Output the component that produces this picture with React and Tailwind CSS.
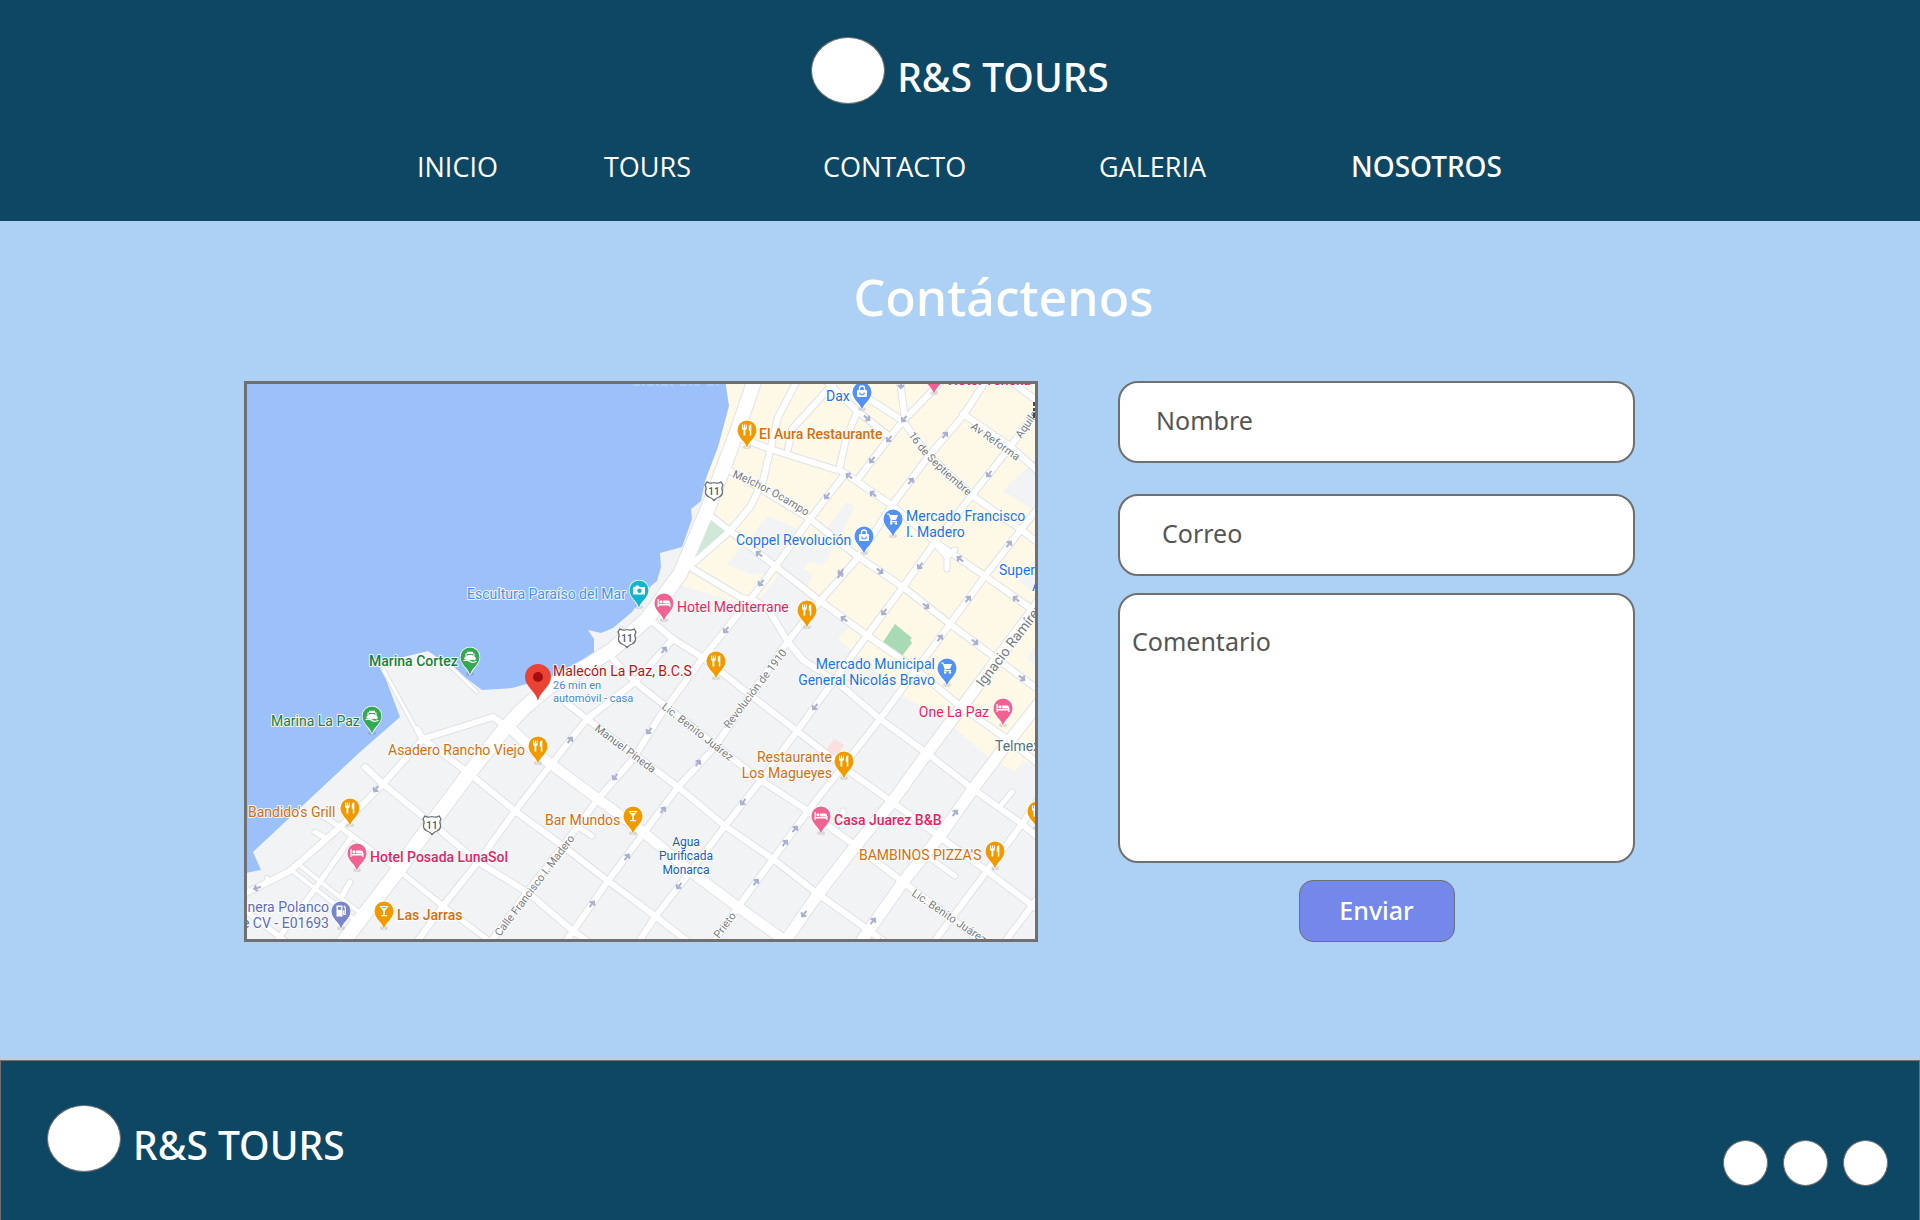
import React from "react";

const ROADS = [
  // [stroke width, points]
  [3, "383,670 417,732"],
  [3, "450,667 477,693"],
  [6, "417,730 423,740 493,718 507,728"],
  [6, "423,740 470,775 515,812 563,847 608,882 655,917 690,944"],
  [6, "365,768 383,785 430,823 478,863 527,893 573,932 590,944"],
  [5, "317,813 340,828 397,870 443,907 492,944"],
  [5, "315,833 327,840"],
  [4, "297,864 360,914"],
  [4, "290,870 354,920"],
  [6, "423,740 383,785 340,828 290,872 268,883 240,897"],
  [5, "350,840 317,887 275,944"],
  [5, "350,883 342,897"],
  [5, "243,910 288,944"],
  [4, "267,879 268,884"],
  [6, "673,640 635,683 587,720 550,767 515,812 478,863 443,907 416,944"],
  [6, "647,618 673,640 702,658 740,688 797,732 850,773 892,803 940,838 987,872 1040,912"],
  [6, "845,475 810,520 775,568 753,597 702,660 660,717 633,760 598,800 563,847 527,893 490,944"],
  [6, "987,380 963,417 928,458 893,505 857,560 820,602 788,642 713,750 678,788 643,835 608,882 573,932 565,944"],
  [6, "1040,408 1010,448 973,495 935,543 903,588 868,635 797,732 762,780 725,827 690,873 655,918 638,944"],
  [6, "1040,507 1020,532 985,577 950,625 880,720 808,812 773,860 738,908 713,944"],
  [6, "1040,798 1022,825 987,872 933,944"],
  [6, "1040,896 1004,944"],
  [6, "727,470 753,485 810,520 857,557 903,588 950,625 1040,692"],
  [6, "708,515 730,532 775,567 820,602 868,637 913,668 960,707 1007,740 1040,766"],
  [6, "688,567 740,598 757,603 768,610 788,643 803,661 837,683 880,720 928,755 973,790 1022,825 1040,840"],
  [6, "743,440 770,450 843,473 893,507 935,543 985,577 1040,616"],
  [6, "826,382 857,412 890,438"],
  [6, "866,398 903,422 927,455 973,497 1020,530 1040,545"],
  [6, "900,382 905,420"],
  [6, "942,382 903,422 890,438 858,480"],
  [6, "963,415 1010,447 1040,474"],
  [6, "1010,382 1040,404"],
  [6, "797,382 778,418 770,452 763,482 750,508 730,532 690,567"],
  [6, "834,384 792,430 788,450"],
  [6, "857,413 846,440 840,467"],
  [5, "937,547 947,558 947,570"],
  [5, "947,558 955,551"],
  [6, "613,660 635,683 720,750 762,782 808,812 857,848 903,883 984,944"],
  [6, "565,703 587,720 678,788 725,827 773,860 818,895 867,930 886,944"],
  [5, "578,828 592,837"],
  [5, "1012,793 1002,805"],
  [5, "928,858 955,877"],
  [5, "843,812 842,827"],
  [10, "507,726 540,757 598,800 643,833 690,872 738,908 788,944"],
  [11, "1040,603 973,693 928,753 892,803 853,850 818,895 784,944"],
  [11, "1040,703 1003,750 973,790 940,837 903,883 860,944"],
  [14, "755,380 738,430 723,470 707,512 680,575 647,620 613,650 587,667 550,687 523,710 507,727 470,773 420,840 397,873 363,917 341,946"],
];

// One-way marks: [x, y, direction in degrees]
const ARROWS = [
  [867, 419, 37], [889, 440, 128], [872, 461, 128], [849, 477, 217], [873, 495, 217],
  [827, 497, 128], [911, 482, -52], [945, 436, -52], [904, 420, 128], [989, 475, 128],
  [901, 386, 90], [759, 555, 217], [841, 573, 128], [880, 572, 37], [920, 567, 128],
  [960, 560, 217], [1009, 545, -52], [726, 631, 128], [664, 651, -52], [649, 732, 128],
  [570, 741, -52], [761, 584, 128], [840, 576, -52], [844, 620, 217], [884, 613, 128],
  [926, 607, 37], [968, 600, -52], [940, 639, -52], [975, 643, 37], [1016, 600, 217],
  [1022, 679, 37], [815, 708, 128], [376, 790, 128], [257, 889, 162], [615, 778, 128],
  [698, 764, -52], [663, 811, -52], [743, 803, 128], [627, 858, -52], [679, 887, 128],
  [592, 905, -52], [756, 883, -52], [795, 830, -52], [785, 844, -52], [955, 814, -52],
  [804, 915, 128], [873, 922, -52],
];

const ORANGE = "#f29900";
const PINK = "#f06292";
const BLUE = "#5491f5";
const GREEN = "#34a853";

const PINS = [
  [862, 393, BLUE, "bag"],
  [747, 431, ORANGE, "fork"],
  [934, 377, PINK, "bed"],
  [893, 520, BLUE, "cart"],
  [864, 537, BLUE, "bag"],
  [639, 591, "#12b5cb", "camera"],
  [664, 604, PINK, "bed"],
  [716, 662, ORANGE, "fork"],
  [470, 658, GREEN, "boat"],
  [538, 747, ORANGE, "fork"],
  [807, 611, ORANGE, "fork"],
  [947, 669, BLUE, "cart"],
  [1003, 709, PINK, "bed"],
  [372, 717, GREEN, "boat"],
  [350, 809, ORANGE, "fork"],
  [357, 854, PINK, "bed"],
  [341, 912, "#7986cb", "gas"],
  [384, 912, ORANGE, "glass"],
  [633, 817, ORANGE, "glass"],
  [844, 762, ORANGE, "fork"],
  [821, 817, PINK, "bed"],
  [995, 852, ORANGE, "fork"],
  [1037, 812, ORANGE, "fork"],
];

const SHOP = "#1a73e8";
const FOOD = "#d56e0c";
const HOTEL = "#e91e63";
const DOCK = "#188038";
const GAS = "#5c6bc0";

// [x, baseline, text, colour, anchor, weight, size]
const LABELS = [
  [826, 402, "Dax", SHOP],
  [759, 440, "El Aura Restaurante", FOOD, "start", 500],
  [948, 386, "Hotel Yeneka", HOTEL, "start", 500],
  [906, 522, "Mercado Francisco", SHOP],
  [906, 538, "I. Madero", SHOP],
  [736, 546, "Coppel Revolución", SHOP],
  [999, 576, "Super", SHOP],
  [1032, 592, "A", SHOP],
  [467, 600, "Escultura Paraíso del Mar", "#4292f6"],
  [677, 613, "Hotel Mediterrane", HOTEL],
  [369, 667, "Marina Cortez", DOCK, "start", 500],
  [553, 677, "Malecón La Paz, B.C.S", "#b31412"],
  [553, 690, "26 min en", "#4285e0", "start", 400, 11],
  [553, 703, "automóvil - casa", "#4285e0", "start", 400, 11],
  [271, 727, "Marina La Paz", DOCK],
  [388, 756, "Asadero Rancho Viejo", FOOD],
  [248, 818, "Bandido's Grill", FOOD],
  [370, 863, "Hotel Posada LunaSol", HOTEL, "start", 500],
  [329, 913, "nera Polanco", GAS, "end"],
  [329, 929, "e CV - E01693", GAS, "end"],
  [397, 921, "Las Jarras", FOOD, "start", 500],
  [545, 826, "Bar Mundos", FOOD],
  [686, 847, "Agua", "#185abc", "middle", 400, 12],
  [686, 861, "Purificada", "#185abc", "middle", 400, 12],
  [686, 875, "Monarca", "#185abc", "middle", 400, 12],
  [832, 763, "Restaurante", FOOD, "end"],
  [832, 779, "Los Magueyes", FOOD, "end"],
  [834, 826, "Casa Juarez B&B", HOTEL, "start", 500],
  [859, 861, "BAMBINOS PIZZA'S", FOOD],
  [935, 670, "Mercado Municipal", SHOP, "end"],
  [935, 686, "General Nicolás Bravo", SHOP, "end"],
  [989, 718, "One La Paz", HOTEL, "end"],
  [995, 752, "Telmex", "#54717e"],
];

// [path that the street name follows, text, size]
const STREETS = [
  ["M732 478 Q770 493 812 521", "Melchor Ocampo", 11],
  ["M908 436 Q925 463 975 503", "16 de Septiembre", 11],
  ["M970 429 L1035 475", "Av Reforma", 11],
  ["M1021 440 L1058 386", "Aquiles", 11],
  ["M983 689 L1060 588", "Ignacio Ramírez", 14],
  ["M729 730 L800 637", "Revolución de 1910", 11],
  ["M661 709 L760 786", "Lic. Benito Juárez", 11],
  ["M594 731 L680 795", "Manuel Pineda", 11],
  ["M500 938 L590 820", "Calle Francisco I. Madero", 11],
  ["M719 940 L750 899", "Prieto", 11],
  ["M911 896 L1000 956", "Lic. Benito Juárez", 11],
  ["M875 945 L900 963", "M", 11],
];

function Glyph({ kind }) {
  switch (kind) {
    case "fork":
      return (
        <g fill="#fff">
          <path d="M-5-5.500h1v3h.8v-3h1.200v3h.8v-3h1v4q0 1.300-1.500 1.700V5.500h-1.800V.2Q-5-.2-5-1.500z" />
          <path d="M1.800-3.500Q2-5.500 4.300-5.800V5.500H2.800V.8H1.800z" />
        </g>
      );
    case "bed":
      return (
        <g fill="#fff">
          <path d="M-6.500-4h1.300v5H5.200v-1h1.300v4H5.200V2.500H-5.200V4h-1.300z" />
          <path d="M-.8-2.600H4.200Q6-2.600 6-.8V.4H-.8z" />
          <circle cx="-3" cy="-1.200" r="1.600" />
        </g>
      );
    case "bag":
      return (
        <g>
          <rect x="-5" y="-2" width="10" height="7" rx="1" fill="#fff" />
          <path d="M-2.500-2v-1.500a2.500 2.500 0 0 1 5 0V-2" fill="none" stroke="#fff" strokeWidth="1.300" />
          <path d="M-2.300.5a2.300 2.300 0 0 0 4.600 0" fill="none" stroke={BLUE} strokeWidth="1.100" />
        </g>
      );
    case "cart":
      return (
        <g fill="#fff">
          <path d="M-3.600-4H5L3 1h-5z" />
          <path d="M-6-5h2L-1.500 1l-.8 1.700H4" fill="none" stroke="#fff" strokeWidth="1.200" />
          <circle cx="-1.800" cy="4.500" r="1.200" />
          <circle cx="3" cy="4.500" r="1.200" />
        </g>
      );
    case "camera":
      return (
        <g>
          <path d="M-6-3h2l1-1.500h2.500L.5-3H6v7.500H-6z" fill="#fff" />
          <circle cx=".5" cy=".7" r="2.200" fill="#12b5cb" />
        </g>
      );
    case "boat":
      return (
        <g>
          <path d="M-4.500-.5v-3h1.500v-1.800h6v1.800h1.500v3L6 1 5 3.500Q2.500 2 0 3.500-2.500 2-5 2.500L-6 1z" fill="#fff" />
          <path d="M-3-1.200V-2.500H3v1.300" fill="none" stroke={GREEN} />
          <path d="M-6.500 3.800q3-1.500 6.500.8 3.500 1.500 6.500-.3" fill="none" stroke="#fff" strokeWidth="1.200" />
        </g>
      );
    case "gas":
      return (
        <g>
          <path d="M-4.500-5.500h6v11h-6z" fill="#fff" />
          <path d="M-3-4h3v2.800h-3z" fill="#7986cb" />
          <path d="M1.500 0h1.200v3.500h1.600v-7l-1.500-1.500" fill="none" stroke="#fff" strokeWidth="1.200" />
        </g>
      );
    default:
      return (
        <g>
          <path d="M-4.500-5h9L.8.3V4H3v1.300h-6V4h2.200V.3z" fill="#fff" />
          <path d="M-2.200-3.500h4.400" stroke={ORANGE} />
        </g>
      );
  }
}

function CityMap() {
  return (
    <svg
      viewBox="247 385 788 555"
      className="block h-auto w-full font-['Roboto',sans-serif]"
      role="img"
      aria-label="Mapa de La Paz, B.C.S."
    >
      <rect x="240" y="380" width="800" height="565" fill="#f1f3f4" />
      <path
        d="M720 380H1040V768L1023 762 1015 773 987 757 947 722 903 697 865 662 838 640 850 628 807 590 812 575 790 563 775 580 757 603 740 604 673 584 700 530z"
        fill="#fef8e7"
      />
      <g fill="#f1f3f4">
        <path d="M768 517L798 530 773 575 750 575 727 565z" />
        <path d="M847 503L855 508 826 562 820 566 810 562 785 590 780 560 826 530z" />
        <path d="M1036 460L1003 492 1036 512z" />
        <path d="M1036 645L1027 660 1036 668z" />
        <path d="M1036 560L1018 582 1036 594z" />
      </g>
      <path
        d="M240 380H725L729 407 718 448 705 482 701 502 691 510 692 520 682 548 660 554 661 568 657 582 651 587 632 613 613 629 601 634 588 631 594 640V659L573 672 523 686 512 689 482 691 450 667 428 652 375 665 382 670 400 718 360 753 253 853 261 871 240 875z"
        fill="#9cc0fa"
      />
      <path d="M709 518L727 532 693 562z" fill="#ceead6" />
      <path d="M895 625L912 639 910 641 912 644 902 657 883 643z" fill="#a8dab5" />
      <path d="M834 740L844 746 837 757 827 750z" fill="#fce0e0" />
      <path d="M633 386h40M680 386h20M707 386h14" stroke="#c5daf8" strokeWidth="1" strokeDasharray="7 2 3 2" />

      <g fill="none" strokeLinecap="round" strokeLinejoin="round">
        {ROADS.map(([w, points], i) => (
          <polyline key={i} points={points} stroke="#dfe2e8" strokeWidth={w + 2} />
        ))}
        {ROADS.map(([w, points], i) => (
          <polyline key={i} points={points} stroke="#fff" strokeWidth={w} />
        ))}
      </g>

      <g fill="none" stroke="#a9afd0" strokeWidth="2">
        {ARROWS.map(([x, y, a], i) => (
          <path key={i} d="M-4 0H3M0-3L3 0 0 3" transform={`translate(${x} ${y}) rotate(${a})`} />
        ))}
      </g>

      <g fill="#757a7f" stroke="#fff" strokeWidth="2" paintOrder="stroke" strokeLinejoin="round">
        {STREETS.map(([d, name, size], i) => (
          <g key={i}>
            <path id={`street-${i}`} d={d} fill="none" stroke="none" />
            <text fontSize={size}>
              <textPath href={`#street-${i}`}>{name}</textPath>
            </text>
          </g>
        ))}
      </g>

      {[[714, 492], [627, 639], [432, 826]].map(([x, y]) => (
        <g key={x} transform={`translate(${x} ${y})`}>
          <path
            d="M-7-9Q-4-7 0-8.500 4-7 7-9L9-6Q7-3 8.500 0 9 4 5 6 2 7 0 9.500-2 7-5 6-9 4-8.500 0-7-3-9-6z"
            fill="#fff"
            stroke="#6b6f73"
            strokeWidth="1.300"
          />
          <text y="4" fontSize="10" fontWeight="500" textAnchor="middle" fill="#4d5156">11</text>
        </g>
      ))}

      {PINS.map(([x, y, color, kind], i) => (
        <g key={i} transform={`translate(${x} ${y})`}>
          <ellipse cy="17" rx="4" ry="2" fill="#000" opacity=".12" />
          <path
            d="M0 18C-1.500 11-9.500 8-9.500 0A9.500 9.500 0 1 1 9.500 0C9.500 8 1.500 11 0 18z"
            fill={color}
            stroke="#fff"
            strokeWidth="1.500"
            paintOrder="stroke"
          />
          <Glyph kind={kind} />
        </g>
      ))}

      <path d="M538 702C536 692 525 688 525 678A13 13 0 1 1 551 678C551 688 540 692 538 702z" fill="#ea4335" />
      <circle cx="538" cy="678" r="5" fill="#a50e0e" />

      <g stroke="#fff" strokeOpacity=".85" strokeWidth="2" paintOrder="stroke" strokeLinejoin="round">
        {LABELS.map(([x, y, text, color, anchor = "start", weight = 400, size = 14], i) => (
          <text key={i} x={x} y={y} fill={color} textAnchor={anchor} fontWeight={weight} fontSize={size}>
            {text}
          </text>
        ))}
      </g>
      <path d="M1034 403v4M1034 409v3M1034 414v5" stroke="#4a4a4a" strokeWidth="2" />
    </svg>
  );
}

function Brand() {
  return (
    <a href="#" className="flex items-center gap-3 text-[39px] leading-[55px] font-medium text-white">
      <span className="h-[67px] w-[74px] rounded-[50%] border border-[#707070] bg-white" />
      <span className="pt-3">R&amp;S TOURS</span>
    </a>
  );
}

const FIELD =
  "block w-full rounded-[20px] border-2 border-[#707070] bg-white text-[25px] leading-9 text-[#555] outline-none placeholder:text-[#555] placeholder:opacity-100";

export default function App() {
  return (
    <div className="flex min-h-screen flex-col bg-[#add1f4] font-['Noto_Sans',sans-serif]">
      <header className="bg-[#0e4764] pt-[37px] pb-9">
        <div className="flex justify-center">
          <Brand />
        </div>
        <nav className="mt-11 grid grid-cols-[187fr_219fr_276fr_252fr_152fr] px-[417px] font-['Open_Sans',sans-serif] text-[27px] leading-[37px] text-white">
          <a href="#inicio">INICIO</a>
          <a href="#tours">TOURS</a>
          <a href="#contacto">CONTACTO</a>
          <a href="#galeria">GALERIA</a>
          <a href="#nosotros" className="font-['Noto_Sans',sans-serif] text-[28px] font-medium">NOSOTROS</a>
        </nav>
      </header>

      <main className="flex-1 pr-[285px] pb-[118px] pl-[244px]">
        <h1 className="pt-10 pb-12 pl-32 text-center text-[50px] leading-[72px] font-medium text-white">Contáctenos</h1>
        <div className="grid grid-cols-[794fr_517fr] items-start gap-20">
          <div className="border-[3px] border-[#707070]">
            <CityMap />
          </div>
          <form className="flex flex-col">
            <input type="text" aria-label="Nombre" placeholder="Nombre" className={`${FIELD} h-[82px] px-9 pb-1`} />
            <input type="email" aria-label="Correo" placeholder="Correo" className={`${FIELD} mt-[31px] h-[82px] px-[42px] pb-1`} />
            <textarea aria-label="Comentario" placeholder="Comentario" className={`${FIELD} mt-[17px] h-[270px] resize-none px-3 pt-7`} />
            <button
              type="button"
              className="mt-[17px] h-[62px] w-[156px] self-center rounded-[14px] border border-[#707070] bg-[#7388e8] text-[25px] font-medium text-white"
            >
              Enviar
            </button>
          </form>
        </div>
      </main>

      <footer className="flex items-start justify-between border border-[#707070] bg-[#0e4764] pt-11 pr-[31px] pb-[46px] pl-[46px]">
        <Brand />
        <div className="flex gap-[15px] pt-[35px]">
          {["Facebook", "Instagram", "Twitter"].map((name) => (
            <a key={name} href="#" aria-label={name} className="h-[46px] w-[45px] rounded-[50%] border border-[#707070] bg-white" />
          ))}
        </div>
      </footer>
    </div>
  );
}
